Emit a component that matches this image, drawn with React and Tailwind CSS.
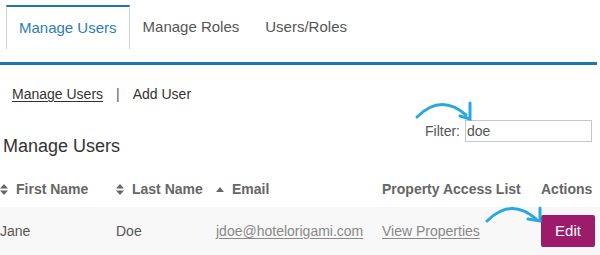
import React from 'react';

const SortBoth = () => (
  <svg width="8" height="11" viewBox="0 0 8 11" className="inline-block">
    <path d="M4 0 L8 4.5 L0 4.5 Z" fill="#666" />
    <path d="M4 11 L8 6.5 L0 6.5 Z" fill="#666" />
  </svg>
);

const SortUp = () => (
  <svg width="8" height="5" viewBox="0 0 8 5" className="inline-block">
    <path d="M4 0 L8 5 L0 5 Z" fill="#666" />
  </svg>
);

const Arrows = () => (
  <svg
    width="600"
    height="255"
    viewBox="0 0 600 255"
    className="absolute left-0 top-0 pointer-events-none"
    fill="none"
    stroke="#29a8e0"
    strokeWidth="3"
    strokeLinecap="round"
  >
    <path d="M417 117 Q441 93 466 115" />
    <path d="M470 103 L470 119 L460 116" />
    <path d="M487 221 Q511 197 536 219" />
    <path d="M540 208 L540 221 L528 219" />
  </svg>
);

const App = () => {
  const columns = [
    { label: 'First Name', sort: 'both' },
    { label: 'Last Name', sort: 'both' },
    { label: 'Email', sort: 'up' },
    { label: 'Property Access List' },
    { label: 'Actions' },
  ];

  return (
    <div className="relative w-[600px] h-[255px] overflow-hidden bg-white font-['Liberation_Sans',Arial,sans-serif]">
      {/* -- tabs */}
      <div className="w-[597px] pt-[5px] pl-[6px] pb-[13px] border-b-[3px] border-[#1b78a8]">
        <div className="flex">
          <div className="h-[44px] px-[12px] flex items-center border-t-2 border-t-[#1b78a8] border-x border-x-[#cfcfcf] text-[15px] text-[#2d7db8]">
            Manage Users
          </div>
          <div className="h-[44px] px-[13px] flex items-center text-[15px] text-[#555]">Manage Roles</div>
          <div className="h-[44px] px-[13px] flex items-center text-[15px] text-[#555]">Users/Roles</div>
        </div>
      </div>

      {/* -- sub nav */}
      <div className="mt-[19px] pl-[12px] flex items-center gap-[13px] text-[14px] leading-[20px] text-[#333]">
        <span className="underline underline-offset-2">Manage Users</span>
        <span className="text-[#555]">|</span>
        <span>Add User</span>
      </div>

      {/* -- heading + filter */}
      <div className="mt-[16px] flex justify-between items-start">
        <h1 className="mt-[16px] pl-[3px] text-[18px] leading-[20px] text-[#333]">Manage Users</h1>
        <div className="mr-[8px] flex items-center gap-[5px] text-[14px] text-[#555]">
          <span>Filter:</span>
          <input
            type="text"
            defaultValue="doe"
            className="w-[127px] h-[22px] px-[1px] border border-[#c8c8c8] outline-none text-[14px] text-[#555]"
          />
        </div>
      </div>

      {/* -- table */}
      <div className="mt-[15px] grid grid-cols-[116px_100px_166px_159px_1fr] text-[14px] leading-[20px]">
        {columns.map((col) => (
          <div key={col.label} className="py-[8px] flex items-center gap-[8px] font-bold text-[#666]">
            {col.sort === 'both' ? <SortBoth /> : null}
            {col.sort === 'up' ? <SortUp /> : null}
            <span>{col.label}</span>
          </div>
        ))}

        <div className="py-[8px] h-[48px] flex items-center bg-[#f8f8f8] text-[#555]">Jane</div>
        <div className="py-[8px] h-[48px] flex items-center bg-[#f8f8f8] text-[#555]">Doe</div>
        <div className="py-[8px] h-[48px] flex items-center bg-[#f8f8f8] text-[#888]">
          <span className="underline underline-offset-2">jdoe@hotelorigami.com</span>
        </div>
        <div className="py-[8px] h-[48px] flex items-center bg-[#f8f8f8] text-[#888]">
          <span className="underline underline-offset-2">View Properties</span>
        </div>
        <div className="py-[8px] h-[48px] flex items-center bg-[#f8f8f8]">
          <button className="w-[54px] h-[32px] rounded-[2px] bg-[#9c1c6b] text-white text-[15px]">Edit</button>
        </div>
      </div>

      <Arrows />
    </div>
  );
};

export default App;
